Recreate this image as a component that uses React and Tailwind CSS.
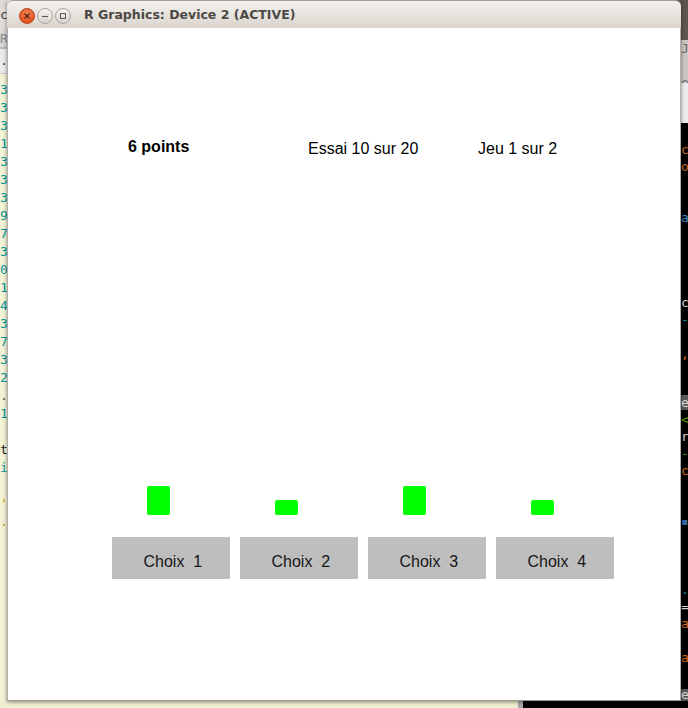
import React from "react";

const mono = "font-['DejaVu_Sans_Mono',monospace] text-[13px]";
const sans = "font-['Liberation_Sans',Arial,sans-serif]";

function LeftStrip() {
  const lines = [
    ["3", "text-[#06989a]"], ["3", "text-[#06989a]"], ["3", "text-[#06989a]"], ["1", "text-[#06989a]"],
    ["3", "text-[#06989a]"], ["3", "text-[#06989a]"], ["3", "text-[#06989a]"], ["9", "text-[#06989a]"],
    ["7", "text-[#06989a]"], ["3", "text-[#06989a]"], ["0", "text-[#06989a]"], ["1", "text-[#06989a]"],
    ["4", "text-[#06989a]"], ["3", "text-[#06989a]"], ["7", "text-[#06989a]"], ["3", "text-[#06989a]"],
    ["2", "text-[#06989a]"], [".", "text-[#555555]"], ["1", "text-[#06989a]"], [" ", "text-black"],
    ["t", "text-[#222222]"], ["i", "text-[#06989a]"], [" ", "text-black"], ["'", "text-[#c4a000]"],
    [".", "text-[#c4a000]"],
  ];
  return (
    <div className={`w-[7px] h-[701px] flex flex-col overflow-hidden ${mono}`}>
      <div className="h-[30px] bg-[#dfdcd7] leading-[30px] text-[#3c3c3c]">c</div>
      <div className="h-[17px] bg-[#d6d6d6] leading-[17px] text-[#8a8a8a]">R</div>
      <div className="h-[2px] bg-[#b8b8b8]" />
      <div className="h-[24px] bg-[#ebebeb] leading-[24px] text-[#444]">.</div>
      <div className="h-[1px] bg-[#c8c8c8]" />
      <div className="flex-1 bg-[#f5f3d6] pt-[7px]">
        {lines.map(([c, cls], i) => (
          <div key={i} className={`h-[18px] leading-[18px] whitespace-pre ${cls}`}>{c}</div>
        ))}
      </div>
    </div>
  );
}

function RightStrip() {
  const sec1 = [
    [" ", ""], ["c", "text-[#d2691e]"], ["o", "text-[#d2691e]"], [" ", ""], [" ", ""],
    ["a", "text-[#3a8fc6]"], [" ", ""], [" ", ""], [" ", ""], [" ", ""],
    ["c", "text-[#d3d7cf]"], ["-", "text-[#06989a]"], [" ", ""], [",", "text-[#d2691e]"],
  ];
  const sec2 = [
    ["<", "text-[#4e9a06]"], ["r", "text-[#d3d7cf]"], ["-", "text-[#4e9a06]"], ["c", "text-[#d2691e]"],
    [" ", ""], [" ", ""], ["▪", "text-[#3465a4]"], [" ", ""], [" ", ""], [" ", ""],
    [".", "text-[#06989a]"], ["=", "text-[#d3d7cf]"], ["a", "text-[#d2691e]"], [" ", ""],
    ["a", "text-[#d2691e]"],
  ];
  return (
    <div className={`w-[7px] h-[701px] flex flex-col overflow-hidden ${mono}`}>
      <div className="h-[40px] bg-[#5f574f]" />
      <div className="h-[43px] bg-[#cbc8c3] leading-[17px] text-[#6b6b6b] whitespace-pre">
        {"J\n\ne"}
      </div>
      <div className="h-[40px] bg-[#ececec]" />
      <div className="h-[274px] bg-black pt-[1.5px]">
        {sec1.map(([c, cls], i) => (
          <div key={i} className={`h-[17px] leading-[17px] whitespace-pre ${cls}`}>{c}</div>
        ))}
      </div>
      <div className="h-[15px] bg-[#5a5a5a] leading-[15px] text-[#dddddd]">e</div>
      <div className="h-[281px] bg-black pt-[1.5px]">
        {sec2.map(([c, cls], i) => (
          <div key={i} className={`h-[17px] leading-[17px] whitespace-pre ${cls}`}>{c}</div>
        ))}
      </div>
      <div className="flex-1 bg-[#5a5a5a] leading-[12px] text-[#dddddd]">e</div>
    </div>
  );
}

function TitleBar() {
  return (
    <div className="h-[28px] bg-gradient-to-r from-[#dedbd6] from-50% to-[#5f574f] to-50%">
      <div className="h-[28px] rounded-t-[6px] border-t border-[#a89f96] bg-gradient-to-b from-[#f4f2ee] to-[#dad4cd] flex items-center pl-[12px]">
        <div className="flex items-center gap-[2px] mt-[2px]">
          <div className="w-[16px] h-[16px] rounded-full border border-[#b8461c] bg-[radial-gradient(circle_at_50%_35%,#f7895a,#e4521f_70%)] flex items-center justify-center">
            <svg width="8" height="8" viewBox="0 0 8 8">
              <path d="M1.5 1.5 L6.5 6.5 M6.5 1.5 L1.5 6.5" stroke="#4a1a08" strokeWidth="1.1" />
            </svg>
          </div>
          <div className="w-[16px] h-[16px] rounded-full border border-[#aaa49d] bg-gradient-to-b from-[#f6f4f1] to-[#d8d3cd] flex items-center justify-center">
            <svg width="8" height="8" viewBox="0 0 8 8">
              <path d="M1 4.5 L7 4.5" stroke="#5a5651" strokeWidth="1.1" />
            </svg>
          </div>
          <div className="w-[16px] h-[16px] rounded-full border border-[#aaa49d] bg-gradient-to-b from-[#f6f4f1] to-[#d8d3cd] flex items-center justify-center">
            <svg width="8" height="8" viewBox="0 0 8 8">
              <rect x="1.5" y="1.5" width="5" height="5" fill="none" stroke="#5a5651" strokeWidth="1" />
            </svg>
          </div>
        </div>
        <div className="ml-[13px] font-['DejaVu_Sans',sans-serif] font-bold text-[12.5px] leading-[28px] text-[#4c4844] whitespace-pre">
          R Graphics: Device 2 (ACTIVE)
        </div>
      </div>
    </div>
  );
}

function Content() {
  const rects = ["h-[29px]", "h-[15px]", "h-[29px]", "h-[15px]"];
  return (
    <div className={`h-[672px] bg-white border-x border-[#b3aea8] flex flex-col ${sans} text-[16px] text-black`}>
      <div className="h-[18px] flex items-start pl-[120px] mt-[110px] leading-[18px] whitespace-pre">
        <div className="w-[180px] font-bold">6 points</div>
        <div className="w-[170px] mt-[1.5px]">Essai 10 sur 20</div>
        <div className="mt-[1.5px]">Jeu 1 sur 2</div>
      </div>
      <div className="mt-[330px] h-[29px] flex items-end pl-[139px] gap-[105px]">
        {rects.map((h, i) => (
          <div key={i} className={`w-[23px] ${h} bg-[#00ff00] rounded-[2px]`} />
        ))}
      </div>
      <div className="mt-[22px] flex pl-[104px] gap-[10px]">
        {[1, 2, 3, 4].map((n) => (
          <div key={n} className="w-[118px] h-[42px] bg-[#bebebe] pt-[16px] pl-[31.5px] leading-[18px] text-[#151515] whitespace-pre">
            {`Choix  ${n}`}
          </div>
        ))}
      </div>
    </div>
  );
}

export default function App() {
  return (
    <div className="w-[688px] h-[708px] overflow-hidden flex flex-col bg-[#f5f3d6]">
      <div className="flex h-[701px]">
        <LeftStrip />
        <div className="relative z-10 w-[674px] h-[701px] flex flex-col shadow-[0_1px_4px_rgba(0,0,0,0.45)]">
          <TitleBar />
          <Content />
          <div className="h-[1px] bg-[#9f9a94]" />
        </div>
        <RightStrip />
      </div>
      <div className="flex h-[7px]">
        <div className="w-[518px] bg-[#f1efd2]" />
        <div className="w-[5px] bg-[#a8a8a8]" />
        <div className="flex-1 bg-black" />
      </div>
    </div>
  );
}
